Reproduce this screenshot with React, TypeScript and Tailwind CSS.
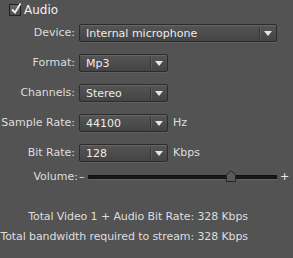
import * as React from "react";

const Arrow = () => (
  <svg width="8" height="5" viewBox="0 0 8 5" className="block">
    <path d="M0 0 H8 L4 5 Z" fill="#e6e6e6" />
  </svg>
);

const Select = ({ value, width }: { value: string; width: string }) => (
  <div
    className={`${width} h-[18px] flex items-stretch border border-[#2b2b2b] rounded-[2px] bg-gradient-to-b from-[#555555] to-[#444444] shadow-[inset_0_1px_0_#666666,0_1px_0_#5f5f5f]`}
  >
    <span className="flex-1 flex items-center pl-[6px] text-[#ececec] leading-none">
      {value}
    </span>
    <span className="w-[1px] my-[2px] bg-[#353535] shadow-[1px_0_0_#5e5e5e]" />
    <span className="w-[16px] flex items-center justify-center">
      <Arrow />
    </span>
  </div>
);

const Row = ({
  label,
  children,
}: {
  label: string;
  children: React.ReactNode;
}) => (
  <div className="flex items-center h-[18px]">
    <span className="w-[76px] text-right pr-[1px] shrink-0 whitespace-nowrap">
      {label}
    </span>
    <div className="ml-[3px] flex items-center">{children}</div>
  </div>
);

const App = () => {
  return (
    <div
      className="w-[293px] h-[258px] bg-[#535353] text-[#dedede] text-[11px] overflow-hidden"
      style={{ fontFamily: '"DejaVu Sans", Verdana, sans-serif' }}
    >
      {/* Audio checkbox */}
      <div className="flex items-center pt-[3px] pl-[9px] h-[17px]">
        <div className="relative w-[12px] h-[12px] border border-[#222222] bg-gradient-to-b from-[#6a6a6a] to-[#4c4c4c]">
          <svg
            width="12"
            height="13"
            viewBox="0 0 12 13"
            className="absolute left-[0px] top-[-3px]"
          >
            <path
              d="M2 7.5 L5 10.5 L10.5 1.5"
              fill="none"
              stroke="#f0f0f0"
              strokeWidth="1.8"
            />
          </svg>
        </div>
        <span className="ml-[3px] text-[12px] text-[#f2f2f2]">Audio</span>
      </div>

      <div className="flex flex-col gap-[12px] mt-[7px]">
        <Row label="Device:">
          <Select value="Internal microphone" width="w-[198px]" />
        </Row>
        <Row label="Format:">
          <Select value="Mp3" width="w-[89px]" />
        </Row>
        <Row label="Channels:">
          <Select value="Stereo" width="w-[89px]" />
        </Row>
        <Row label="Sample Rate:">
          <Select value="44100" width="w-[89px]" />
          <span className="ml-[5px]">Hz</span>
        </Row>
        <Row label="Bit Rate:">
          <Select value="128" width="w-[89px]" />
          <span className="ml-[5px]">Kbps</span>
        </Row>
      </div>

      {/* Volume */}
      <div className="flex items-center h-[14px] mt-[8px]">
        <span className="w-[78px] text-right shrink-0">Volume:</span>
        <span className="ml-[1px] w-[5px]">–</span>
        <div className="relative ml-[4px] w-[189px] h-[4px] bg-[#1a1a1a] border border-[#101010] shadow-[0_1px_0_#666666]">
          <svg
            width="10"
            height="12"
            viewBox="0 0 10 12"
            className="absolute left-[137px] top-[-6px]"
          >
            <path
              d="M0.5 11.5 V5 L5 0.5 L9.5 5 V11.5 Z"
              fill="#5a5a5a"
              stroke="#252525"
            />
          </svg>
        </div>
        <span className="ml-[3px] text-[#e8e8e8]">+</span>
      </div>

      {/* Totals */}
      <div className="flex flex-col items-end w-[248px] mt-[25px] gap-[4px] leading-[16px] tracking-[-0.1px] whitespace-nowrap">
        <span>Total Video 1 + Audio Bit Rate: 328 Kbps</span>
        <span>Total bandwidth required to stream: 328 Kbps</span>
      </div>
    </div>
  );
};

export default App;
